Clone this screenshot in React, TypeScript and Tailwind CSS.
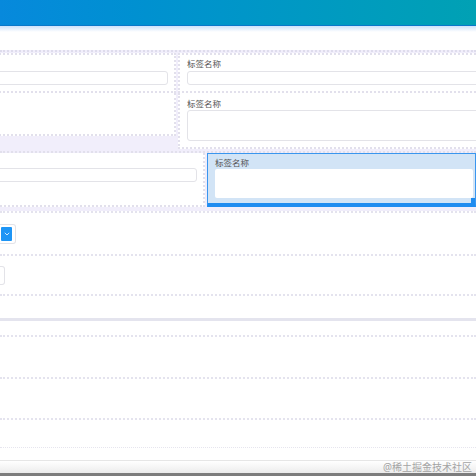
import React from "react";

const FONT = { fontFamily: '"Noto Sans", "Noto Sans CJK SC", sans-serif' };

// 输入框（单行）
function Input({ className = "" }: { className?: string }) {
  return <div className={`h-[14px] rounded-[3px] border border-[#e3e3e8] bg-white ${className}`} />;
}

// 多行文本框
function Textarea({ className = "" }: { className?: string }) {
  return <div className={`h-[31px] rounded-[3px] border border-[#e3e3e8] bg-white ${className}`} />;
}

function Label({ text = "标签名称" }: { text?: string }) {
  return <div className="h-[13px] text-[8.5px] leading-[13px] text-[#555]">{text}</div>;
}

function Dotted() {
  return <div className="h-0 border-t-2 border-dotted border-[#e4e3ee]" />;
}

export default function App() {
  return (
    <div className="relative flex h-[476px] w-[476px] flex-col overflow-hidden bg-white" style={FONT}>
      {/* 顶部导航条 */}
      <div className="h-[26px] shrink-0 border-b border-[#0b78c9] bg-gradient-to-r from-[#0789dc] to-[#01a1b4]" />
      <div className="h-[6px] shrink-0 bg-gradient-to-b from-[#cde2fa] to-white" />
      <div className="h-[18px] shrink-0" />

      {/* 表单设计区 */}
      <div className="flex shrink-0 flex-col border-t-2 border-dotted border-[#dedcec] bg-[#f1eefb] pt-px">
        {/* 第一行 */}
        <div className="flex h-[40px] gap-[2px]">
          <div className="-ml-[184px] flex w-[360px] flex-col border-2 border-dotted border-[#e2e0ec] bg-white px-[6px] pt-[2px]">
            <div className="h-[13px]" />
            <Input className="mt-[1px]" />
          </div>
          <div className="flex flex-1 flex-col border-2 border-r-0 border-dotted border-[#e2e0ec] bg-white pl-[7px] pt-[2px]">
            <Label />
            <Input className="mt-[1px] -mr-[10px]" />
          </div>
        </div>

        {/* 第二行 */}
        <div className="flex h-[56px] gap-[2px]">
          <div className="-ml-[184px] flex h-[43px] w-[360px] flex-col border-2 border-t-0 border-dotted border-[#e2e0ec] bg-white" />
          <div className="flex flex-1 flex-col border-2 border-r-0 border-t-0 border-dotted border-[#e2e0ec] bg-white pl-[7px] pt-[4px]">
            <Label />
            <Textarea className="-mr-[10px]" />
          </div>
        </div>

        {/* 第三行（选中） */}
        <div className="mt-[2px] flex h-[56px] gap-[2px] border-t-2 border-dotted border-[#e2e0ec]">
          <div className="-ml-[155px] flex w-[360px] flex-col border-2 border-t-0 border-dotted border-[#e2e0ec] bg-white px-[6px] pt-[15px]">
            <Input />
          </div>
          <div className="relative flex flex-1 flex-col border border-b-[4px] border-[#3a96ef] border-b-[#1f8cf0] bg-[#d2e4f6] pl-[7px] pt-[2px]">
            <Label />
            <div className="mr-[2px] h-[29px] rounded-[2px] bg-white" />
            <div className="absolute bottom-0 right-0 h-[5px] w-[4px] bg-[#1f8cf0]" />
          </div>
        </div>
        <div className="h-[4px]" />
      </div>
      <Dotted />

      {/* 下拉选择行 */}
      <div className="flex h-[41px] shrink-0 items-center">
        <div className="flex h-[20px] w-[16px] items-center justify-end rounded-r-[3px] border border-l-0 border-[#e3e3e8] bg-white pr-[3px]">
          <div className="flex h-[14px] w-[11px] items-center justify-center rounded-[1px] bg-[#1e95f5]">
            <svg width="6" height="4" viewBox="0 0 6 4">
              <path d="M0.8 0.8 L3 3 L5.2 0.8" stroke="#cfe8ff" strokeWidth="1" fill="none" />
            </svg>
          </div>
        </div>
      </div>
      <Dotted />

      <div className="flex h-[38px] shrink-0 items-center">
        <div className="h-[19px] w-[5px] rounded-r-[3px] border border-l-0 border-[#e3e3e8]" />
      </div>
      <Dotted />

      <div className="h-[22px] shrink-0" />
      <div className="h-[3px] shrink-0 bg-[#e4e4ee]" />
      <div className="h-[14px] shrink-0" />
      <Dotted />
      <div className="h-[40px] shrink-0" />
      <Dotted />
      <div className="h-[39px] shrink-0" />
      <Dotted />
      <div className="h-[27px] shrink-0" />
      <div className="h-0 shrink-0 border-t border-dotted border-[#e6e5ee]" />
      <div className="flex-1" />

      {/* 底部水印栏 */}
      <div className="flex h-[13px] shrink-0 items-center justify-end border-t border-[#e6e6e6] bg-gradient-to-b from-white to-[#ececec] pr-[4px]">
        <span className="text-[10px] leading-none text-[#a4a4a4]">@稀土掘金技术社区</span>
      </div>
      <div className="h-[3px] shrink-0 bg-[#7d7d7d]" />
    </div>
  );
}
